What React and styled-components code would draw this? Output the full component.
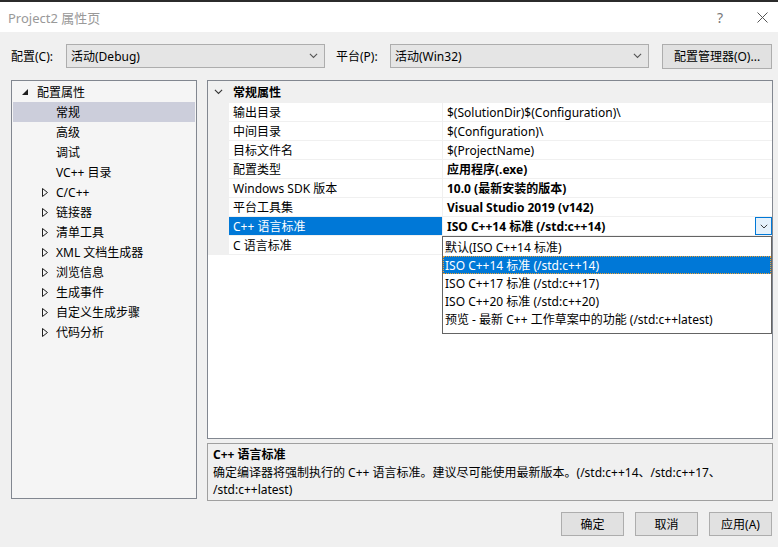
import React from "react"
import styled, { createGlobalStyle } from "styled-components"

const Global = createGlobalStyle`
  html, body {
    margin: 0;
    padding: 0;
    background: #f0f0f0;
  }
  body {
    font-family: "Noto Sans", "Noto Sans CJK SC", sans-serif;
    font-size: 12px;
    color: #000;
  }
  * { box-sizing: border-box; }
`

const Window = styled.div`
  width: 778px;
  height: 547px;
  display: flex;
  flex-direction: column;
  background: #f0f0f0;
  border-top: 2px solid #2b2b2b;
  overflow: hidden;
`

const TitleBar = styled.div`
  height: 30px;
  background: #fff;
  display: flex;
  align-items: center;
  justify-content: space-between;
  padding: 0 10px 0 8px;
  color: #999;
  font-size: 13px;
`

const TitleButtons = styled.div`
  display: flex;
  align-items: center;
  gap: 34px;
  color: #777;
  font-size: 14px;
`

const Toolbar = styled.div`
  height: 48px;
  display: flex;
  align-items: center;
  padding: 0 6px 0 11px;
`

const Label = styled.span`
  width: ${p => p.$w}px;
  white-space: nowrap;
`

const Select = styled.div`
  width: 259px;
  height: 24px;
  margin-right: ${p => p.$mr || 0}px;
  display: flex;
  align-items: center;
  justify-content: space-between;
  padding: 0 6px 0 4px;
  background: #e5e5e5;
  border: 1px solid #adadad;
`

const Button = styled.div`
  width: ${p => p.$w}px;
  height: ${p => p.$h || 24}px;
  display: flex;
  align-items: center;
  justify-content: center;
  background: #e1e1e1;
  border: 1px solid #adadad;
  white-space: nowrap;
`

const Main = styled.div`
  height: 421px;
  display: flex;
  gap: 10px;
  padding-left: 11px;
`

const Tree = styled.div`
  width: 186px;
  height: 419px;
  background: #f5f5f5;
  border: 1px solid #828790;
  padding: 1px;
`

const TreeRow = styled.div`
  height: 20px;
  display: flex;
  align-items: center;
  padding-left: ${p => p.$indent}px;
  background: ${p => (p.$selected ? "#cccedb" : "transparent")};
  white-space: nowrap;
`

const Arrow = styled.span`
  width: ${p => p.$w}px;
  display: flex;
  align-items: center;
`

const RightCol = styled.div`
  width: 566px;
  display: flex;
  flex-direction: column;
  gap: 4px;
`

const Grid = styled.div`
  position: relative;
  height: 359px;
  background: #fff;
  border: 1px solid #828790;
`

const GroupHeader = styled.div`
  height: 22px;
  display: flex;
  align-items: center;
  background: #f0f0f0;
  font-weight: bold;
`

const Gutter = styled.div`
  width: 21px;
  display: flex;
  justify-content: center;
  align-items: center;
`

const GroupBody = styled.div`
  display: flex;
`

const GutterFill = styled.div`
  width: 21px;
  background: #f0f0f0;
`

const Rows = styled.div`
  flex: 1;
`

const Row = styled.div`
  height: 19px;
  display: flex;
  border-bottom: 1px solid #f0f0f0;
`

const NameCell = styled.div`
  width: 214px;
  display: flex;
  align-items: center;
  padding-left: 4px;
  border-right: 1px solid #f0f0f0;
  background: ${p => (p.$selected ? "#0078d7" : "transparent")};
  color: ${p => (p.$selected ? "#fff" : "#000")};
  white-space: nowrap;
`

const ValueCell = styled.div`
  flex: 1;
  display: flex;
  align-items: center;
  justify-content: space-between;
  padding-left: 4px;
  font-weight: ${p => (p.$bold ? "bold" : "normal")};
  white-space: nowrap;
`

const DropButton = styled.div`
  width: 17px;
  height: 18px;
  display: flex;
  align-items: center;
  justify-content: center;
  background: #e5f1fb;
  border: 1px solid #0078d7;
`

const DropList = styled.div`
  position: absolute;
  left: 234px;
  top: 155px;
  width: 330px;
  height: 98px;
  background: #fff;
  border: 1px solid #646464;
  padding-top: 1px;
`

const DropItem = styled.div`
  height: 18px;
  display: flex;
  align-items: center;
  padding-left: 2px;
  white-space: nowrap;
  background: ${p => (p.$selected ? "#0078d7" : "transparent")};
  color: ${p => (p.$selected ? "#fff" : "#000")};
  outline: ${p => (p.$selected ? "1px dotted #f0a030" : "none")};
  outline-offset: -1px;
`

const Description = styled.div`
  height: 58px;
  border: 1px solid #a0a0a0;
  background: #f0f0f0;
  padding: 2px 5px;
  line-height: 17.5px;
`

const DescTitle = styled.div`
  font-weight: bold;
`

const Footer = styled.div`
  display: flex;
  justify-content: flex-end;
  gap: 11px;
  padding: 11px 6px 0 0;
`

const Chevron = ({ color = "#555", size = 9 }) => (
  <svg width={size} height={size * 0.6} viewBox="0 0 10 6">
    <path d="M1 1 L5 5 L9 1" fill="none" stroke={color} strokeWidth="1.2" />
  </svg>
)

const Expanded = () => (
  <svg width="6" height="6" viewBox="0 0 6 6">
    <path d="M6 0 L6 6 L0 6 Z" fill="#1e1e1e" />
  </svg>
)

const Collapsed = () => (
  <svg width="6" height="9" viewBox="0 0 6 9">
    <path d="M0.5 0.5 L5.5 4.5 L0.5 8.5 Z" fill="none" stroke="#1e1e1e" strokeWidth="1" />
  </svg>
)

const CloseIcon = () => (
  <svg width="11" height="11" viewBox="0 0 11 11">
    <path d="M0.5 0.5 L10.5 10.5 M10.5 0.5 L0.5 10.5" stroke="#555" strokeWidth="1" />
  </svg>
)

const treeChildren = ["常规", "高级", "调试", "VC++ 目录"]
const treeGroups = [
  "C/C++",
  "链接器",
  "清单工具",
  "XML 文档生成器",
  "浏览信息",
  "生成事件",
  "自定义生成步骤",
  "代码分析",
]

const props = [
  { name: "输出目录", value: "$(SolutionDir)$(Configuration)\\" },
  { name: "中间目录", value: "$(Configuration)\\" },
  { name: "目标文件名", value: "$(ProjectName)" },
  { name: "配置类型", value: "应用程序(.exe)", bold: true },
  { name: "Windows SDK 版本", value: "10.0 (最新安装的版本)", bold: true },
  { name: "平台工具集", value: "Visual Studio 2019 (v142)", bold: true },
  { name: "C++ 语言标准", value: "ISO C++14 标准 (/std:c++14)", bold: true, selected: true },
  { name: "C 语言标准", value: "" },
]

const options = [
  "默认(ISO C++14 标准)",
  "ISO C++14 标准 (/std:c++14)",
  "ISO C++17 标准 (/std:c++17)",
  "ISO C++20 标准 (/std:c++20)",
  "预览 - 最新 C++ 工作草案中的功能 (/std:c++latest)",
]

export default function App() {
  return (
    <Window>
      <Global />
      <TitleBar>
        <span>Project2 属性页</span>
        <TitleButtons>
          <span>?</span>
          <CloseIcon />
        </TitleButtons>
      </TitleBar>

      <Toolbar>
        <Label $w={55}>配置(C):</Label>
        <Select $mr={11}>
          <span>活动(Debug)</span>
          <Chevron />
        </Select>
        <Label $w={54}>平台(P):</Label>
        <Select $mr={13}>
          <span>活动(Win32)</span>
          <Chevron />
        </Select>
        <Button $w={110} $h={25}>配置管理器(O)...</Button>
      </Toolbar>

      <Main>
        <Tree>
          <TreeRow $indent={9}>
            <Arrow $w={15}><Expanded /></Arrow>
            配置属性
          </TreeRow>
          {treeChildren.map(t => (
            <TreeRow key={t} $indent={43} $selected={t === "常规"}>
              {t}
            </TreeRow>
          ))}
          {treeGroups.map(t => (
            <TreeRow key={t} $indent={29}>
              <Arrow $w={14}><Collapsed /></Arrow>
              {t}
            </TreeRow>
          ))}
        </Tree>

        <RightCol>
          <Grid>
            <GroupHeader>
              <Gutter><Chevron color="#333" size={9} /></Gutter>
              <span style={{ paddingLeft: 4 }}>常规属性</span>
            </GroupHeader>
            <GroupBody>
              <GutterFill />
              <Rows>
                {props.map(p => (
                  <Row key={p.name}>
                    <NameCell $selected={p.selected}>{p.name}</NameCell>
                    <ValueCell $bold={p.bold}>
                      <span>{p.value}</span>
                      {p.selected && (
                        <DropButton><Chevron color="#333" size={8} /></DropButton>
                      )}
                    </ValueCell>
                  </Row>
                ))}
              </Rows>
            </GroupBody>
            <DropList>
              {options.map((o, i) => (
                <DropItem key={o} $selected={i === 1}>{o}</DropItem>
              ))}
            </DropList>
          </Grid>
          <Description>
            <DescTitle>C++ 语言标准</DescTitle>
            <div>
              确定编译器将强制执行的 C++ 语言标准。建议尽可能使用最新版本。(/std:c++14、/std:c++17、
              /std:c++latest)
            </div>
          </Description>
        </RightCol>
      </Main>

      <Footer>
        <Button $w={63}>确定</Button>
        <Button $w={63}>取消</Button>
        <Button $w={63}>应用(A)</Button>
      </Footer>
    </Window>
  )
}
